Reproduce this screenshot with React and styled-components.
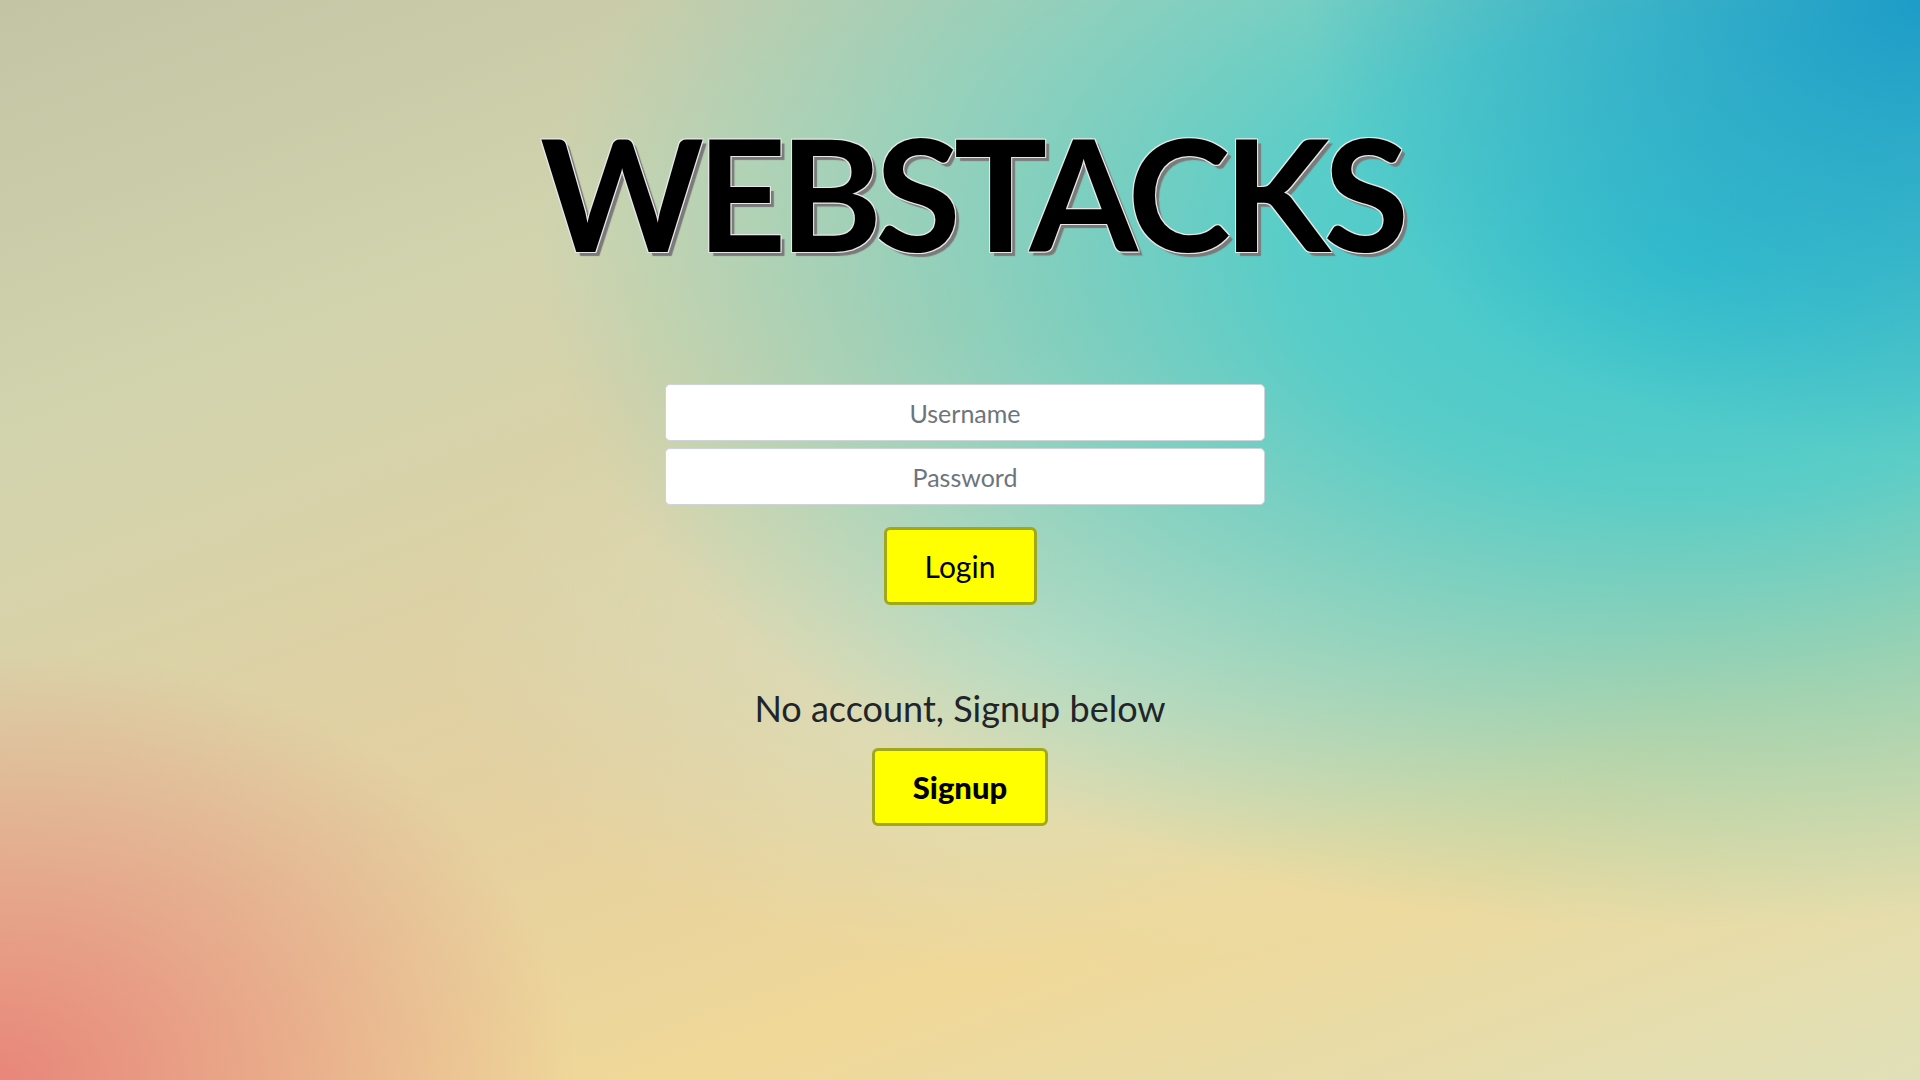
import styled, { createGlobalStyle } from "styled-components";

const GlobalStyle = createGlobalStyle`
  html, body {
    margin: 0;
    padding: 0;
  }
  body {
    font-family: Lato, "Open Sans", sans-serif;
    color: #212529;
  }
  * {
    box-sizing: border-box;
  }
`;

const App = () => {
  return (
    <Page>
      <GlobalStyle />
      <Title>WEBSTACKS</Title>
      <LoginForm onSubmit={(e) => e.preventDefault()}>
        <Fields>
          <Field type="text" placeholder="Username" />
          <Field type="password" placeholder="Password" />
        </Fields>
        <YellowButton type="submit">Login</YellowButton>
      </LoginForm>
      <SignupBlock>
        <Hint>No account, Signup below</Hint>
        <YellowButton type="button" $bold>
          Signup
        </YellowButton>
      </SignupBlock>
    </Page>
  );
};

export default App;

const Page = styled.div`
  min-height: 100vh;
  display: flex;
  flex-direction: column;
  align-items: center;
  padding-top: 114px;
  background:
    radial-gradient(ellipse 32% 42% at 100% 0%, #1c9cc8 0%, rgba(28, 156, 200, 0) 100%),
    radial-gradient(ellipse 60% 62% at 88% 24%, rgba(58, 198, 206, 1) 0%, rgba(66, 204, 206, 0.85) 35%, rgba(80, 205, 205, 0) 100%),
    radial-gradient(ellipse 32% 30% at 55% 60%, rgba(208, 232, 210, 0.65) 0%, rgba(208, 232, 210, 0) 100%),
    radial-gradient(ellipse 30% 40% at 0% 100%, #e8867a 0%, rgba(232, 134, 122, 0) 100%),
    linear-gradient(160deg, #c2c4a4 0%, #d2d4ae 25%, #e4d0a0 55%, #f0d898 75%, #e0e0b8 100%);
`;

const Title = styled.h1`
  margin: 0 0 0 22px;
  font-family: Lato, "Open Sans", sans-serif;
  font-weight: 700;
  font-size: 156px;
  line-height: 1;
  letter-spacing: -7px;
  color: #000;
  text-shadow:
    1px 1px 0 #e8e8e8,
    -1px -1px 0 #e8e8e8,
    1px -1px 0 #e8e8e8,
    -1px 1px 0 #e8e8e8,
    4px 4px 1px #7a7a7a;
`;

const LoginForm = styled.form`
  display: flex;
  flex-direction: column;
  align-items: center;
  margin-top: 114px;
`;

const Fields = styled.div`
  display: flex;
  flex-direction: column;
  gap: 7px;
  margin-left: 10px;
`;

const Field = styled.input`
  width: 600px;
  height: 57px;
  border: 1px solid #ced4da;
  border-radius: 5px;
  background: #fff;
  text-align: center;
  font-family: Lato, "Open Sans", sans-serif;
  font-size: 25px;
  color: #495057;
  outline: none;

  &::placeholder {
    color: #6c757d;
  }
`;

const YellowButton = styled.button`
  min-width: ${(p) => (p.$bold ? "176px" : "153px")};
  height: 78px;
  padding: 0 24px;
  background: #ffff00;
  border: 3px solid #a1a81c;
  border-radius: 6px;
  font-family: Lato, "Open Sans", sans-serif;
  font-size: ${(p) => (p.$bold ? "31px" : "30px")};
  font-weight: ${(p) => (p.$bold ? 900 : 400)};
  color: #000;
  cursor: pointer;

  form & {
    margin-top: 22px;
  }
`;

const SignupBlock = styled.div`
  display: flex;
  flex-direction: column;
  align-items: center;
  margin-top: 82px;
`;

const Hint = styled.p`
  margin: 0 0 18px;
  font-size: 36px;
  line-height: 1.2;
  color: #212529;
`;
